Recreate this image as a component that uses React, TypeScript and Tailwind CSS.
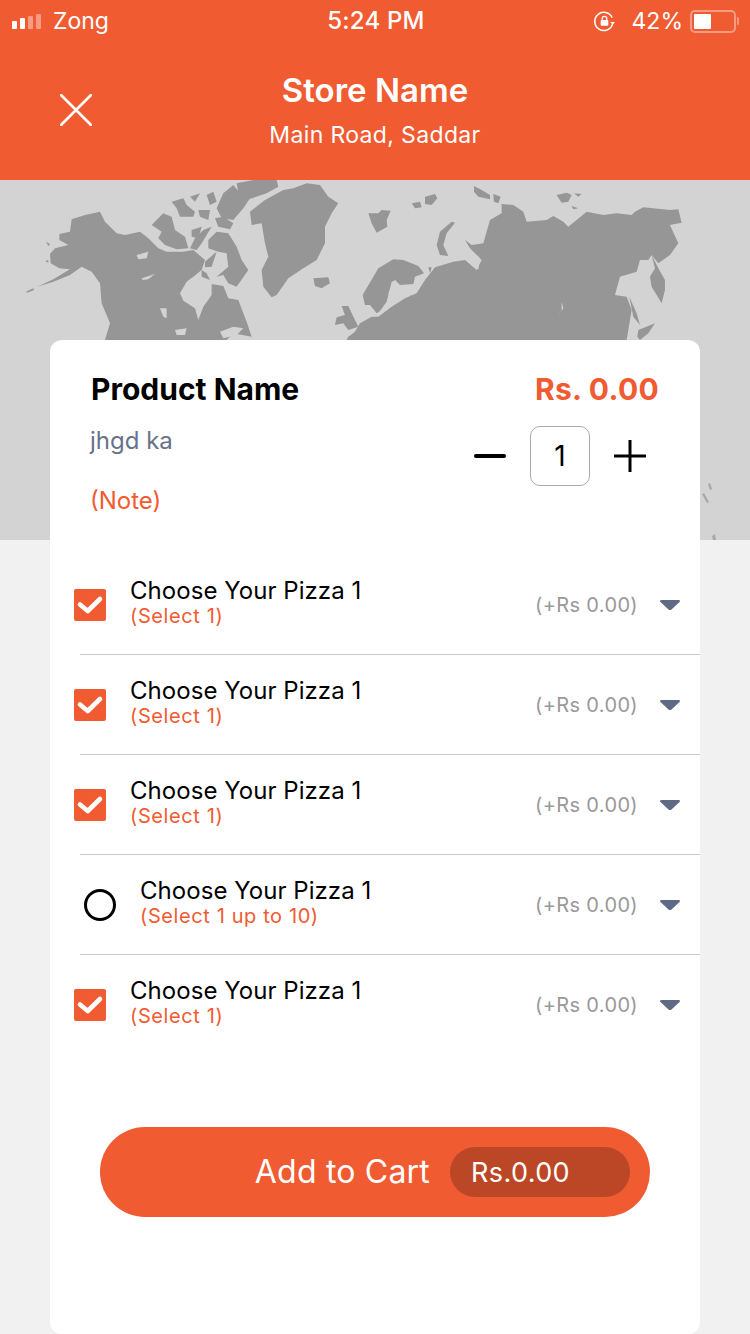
const orange = 'text-[#f05b32]';

// traced from the left half of the map (3x coords)
const americas = [
  '52,320 100,298 150,268 118,265 92,250 90,222 105,205 145,195 118,180 118,162 150,155 155,118 195,105 240,95 255,125 290,160 315,165 360,155 385,175 415,205 440,215 490,215 520,210 555,240 545,270 520,290 500,305 480,340 490,362 525,385 535,420 550,380 575,345 575,312 610,318 625,355 655,360 670,400 680,425 695,470 640,460 620,480 255,480 270,430 245,370 240,310 215,275 185,260 150,285 100,305',
  '18,335 40,325 42,330 22,338',
  '78,185 90,192 85,198',
  '75,243 85,240 85,248',
  '395,135 430,100 455,110 465,150 495,170 505,205 470,208 435,195 415,175 425,155',
  '515,150 545,140 535,175 515,170',
  '550,150 575,140 545,190 530,210 510,205 525,175',
  '565,180 590,155 625,160 650,200 665,240 685,270 650,320 625,310 610,285 590,290 625,260 620,220 595,215 565,205',
  '555,245 590,215 575,260 555,262',
  '545,270 560,280 570,300 545,290',
  '455,65 490,55 500,75 525,95 520,110 480,110 470,85',
  '510,50 540,40 525,65',
  '560,45 580,35 590,65 570,75',
  '535,90 570,90 565,120 540,110',
  '585,115 610,110 640,130 630,148 595,140',
  '590,85 610,40 640,15 660,40 690,55 670,85 640,120 605,115',
  '650,10 700,0 770,0 775,20 740,40 680,60 655,40',
  // greenland
  '690,95 735,60 790,30 820,25 860,10 900,15 925,50 955,70 935,100 915,140 915,190 890,240 850,265 805,295 770,345 755,352 730,320 725,270 745,230 735,190 725,130 695,135',
  // iceland
  '880,295 925,292 930,310 905,325 885,318',
  // britain
  '965,378 985,378 1005,420 1015,440 985,450 970,430 945,435 950,412 975,405',
  '985,470 1020,445 1020,480 980,480',
];

const americasLakes = [
  '350,225 385,215 380,235 355,238',
  '365,295 405,282 385,298 368,300',
  '465,450 500,445 495,465 470,465',
  '600,455 640,440 670,445 650,465 610,475',
  '420,385 440,385 440,415 430,410',
];

// traced from the right half of the map (3x coords)
const eurasia = [
  '55,100 85,100 95,90 122,92 110,120 112,140 80,158 65,130',
  '185,70 210,65 215,82 195,85',
  '225,50 255,42 262,55 245,75 225,72',
  '305,125 315,128 290,160 280,195 295,228 270,225 260,195 270,155',
  '372,18 395,30 420,45 420,58 385,50 372,35',
  '430,42 452,50 445,70 432,65',
  '620,45 650,38 665,45 655,65 635,68',
  '672,40 695,42 685,50',
  '665,78 685,85 670,88',
  '0,480 30,430 65,410 85,410 125,380 165,355 200,340 225,300 255,262 310,245 345,240 380,270 395,240 360,205 345,180 365,195 400,190 420,120 455,100 455,72 490,75 520,95 530,125 590,120 610,108 640,125 655,140 680,120 710,95 760,105 800,100 845,105 855,95 880,82 960,90 985,88 995,128 960,135 985,190 960,225 925,250 905,225 895,240 870,240 860,275 810,290 795,345 830,350 845,390 830,480',
  '38,345 85,265 130,238 160,240 205,258 222,280 195,290 190,312 150,315 135,300 115,340 125,365 105,385 80,400 60,375 45,375',
  '905,225 925,265 945,300 945,330 935,370 905,320 900,290 915,265',
  '838,350 860,400 870,435 850,410',
  '865,450 915,430 895,460 870,480 862,470',
  '235,262 245,262 240,280',
  '180,345 190,350 185,355',
  '0,405 20,430 5,445',
];

const eurasiaLakes = [
  '635,365 640,385 625,405 635,390',
  '385,270 390,235 380,225 378,260',
  '125,305 138,300 122,340 128,362 108,385 85,400 110,365',
];

const specks = [
  '702,314 704,313 709,322 707,323',
  '708,304 710,303 712,309 710,310',
  '712,356 715,354 716,360 713,360',
];

function WorldMap() {
  return (
    <svg viewBox="0 0 750 360" className="block w-[750px] h-[360px]">
      <g transform="translate(20 0) scale(0.3333)">
        <g fill="#969696">{americas.map((p, i) => <polygon key={i} points={p} />)}</g>
        <g fill="#d3d3d3">{americasLakes.map((p, i) => <polygon key={i} points={p} />)}</g>
      </g>
      <g transform="translate(350 0) scale(0.3333)">
        <g fill="#969696">{eurasia.map((p, i) => <polygon key={i} points={p} />)}</g>
        <g fill="#d3d3d3">{eurasiaLakes.map((p, i) => <polygon key={i} points={p} />)}</g>
      </g>
      <g fill="#a8a8a8">{specks.map((p, i) => <polygon key={i} points={p} />)}</g>
    </svg>
  );
}

function StatusBar() {
  return (
    <div className="grid grid-cols-3 items-center h-[42px] pl-[12px] pr-[14px] text-white">
      <div className="flex items-center gap-[12px]">
        <div className="flex items-end gap-[3px] h-[15px]">
          <span className="w-[5px] h-[8px] rounded-[1px] bg-white" />
          <span className="w-[5px] h-[11px] rounded-[1px] bg-white" />
          <span className="w-[5px] h-[13px] rounded-[1px] bg-white/40" />
          <span className="w-[5px] h-[15px] rounded-[1px] bg-white/40" />
        </div>
        <span className="text-[23px] leading-none">Zong</span>
      </div>
      <div className="pl-[4px] text-center text-[24px] font-medium leading-none tracking-[0.2px]">5:24 PM</div>
      <div className="flex items-center justify-end">
        <svg viewBox="0 0 24 24" className="w-[23px] h-[23px] mr-[16px]" fill="none" stroke="white" strokeWidth="1.6">
          <path d="M20.5 14.5A9.5 9.5 0 1 1 20 8" />
          <path d="M18 12.5h5l-2.5 3z" fill="white" stroke="none" />
          <rect x="8" y="10.5" width="8" height="6" rx="1" fill="white" stroke="none" />
          <path d="M9.6 10.5V9a2.4 2.4 0 0 1 4.8 0v1.5" strokeWidth="1.3" />
        </svg>
        <span className="text-[23px] leading-none mr-[7px]">42%</span>
        <div className="relative w-[46px] h-[23px] rounded-[5px] border-2 border-white/40 p-[2px]">
          <div className="w-[17px] h-full bg-white rounded-[1px]" />
          <span className="absolute right-[-5px] top-[5px] w-[2px] h-[8px] rounded-r-sm bg-white/40" />
        </div>
      </div>
    </div>
  );
}

function Check() {
  return (
    <div className="flex items-center justify-center w-[32px] h-[32px] rounded-[2px] bg-[#f05b32] shrink-0">
      <svg viewBox="0 0 32 32" className="w-[32px] h-[32px]" fill="none" stroke="white" strokeWidth="4.6" strokeLinecap="round" strokeLinejoin="round">
        <path d="M6 15.5 13.7 22 26 10" />
      </svg>
    </div>
  );
}

function Radio() {
  return <div className="w-[32px] h-[32px] rounded-full border-[3.5px] border-black shrink-0" />;
}

type RowProps = { radio?: boolean; note?: string; last?: boolean };

function OptionRow({ radio, note = '(Select 1)', last }: RowProps) {
  return (
    <div className="flex flex-col h-[100px]">
      <div className={`flex-1 flex items-center pr-[20px] ${radio ? 'pl-[34px]' : 'pl-[24px]'}`}>
        {radio ? <Radio /> : <Check />}
        <div className="ml-[24px] flex-1 pb-[6px]">
          <div className="text-[24px] leading-[29px] tracking-[0.05px] text-black">Choose Your Pizza 1</div>
          <div className={`text-[20px] leading-[23px] tracking-[0.6px] ${orange}`}>{note}</div>
        </div>
        <span className="text-[20px] tracking-[0.35px] text-[#999999]">(+Rs 0.00)</span>
        <svg viewBox="0 0 20 10" className="ml-[22px] w-[20px] h-[10px]" fill="#5f6b85">
          <path d="M0.5 0h19l0.5 1.5L11 10H9L0 1.5z" />
        </svg>
      </div>
      {!last && <div className="h-px ml-[30px] bg-[#c9c9c9]" />}
    </div>
  );
}

export default function App() {
  return (
    <div className="w-[750px] h-[1334px] overflow-hidden bg-[#f1f1f1] font-['Inter',sans-serif]">
      <header className="h-[180px] bg-[#f05b32]">
        <StatusBar />
        <div className="relative text-center text-white">
          <div className="pt-[28px] text-[33px] font-semibold leading-[40px]">Store Name</div>
          <div className="mt-[10px] text-[23px] leading-[30px] tracking-[0.35px]">Main Road, Saddar</div>
          <svg viewBox="0 0 32 32" className="absolute left-[60px] top-[52px] w-[32px] h-[32px]" stroke="white" strokeWidth="2.6" strokeLinecap="round">
            <path d="M1 1 31 31M31 1 1 31" />
          </svg>
        </div>
      </header>

      <div className="h-[360px] bg-[#d3d3d3]">
        <WorldMap />
      </div>

      <main className="relative mx-[50px] mt-[-200px] h-[994px] rounded-[12px] bg-white">
        <div className="flex items-center justify-between px-[41px] pt-[31px]">
          <h1 className="text-[30px] font-bold leading-[36px] text-black">Product Name</h1>
          <span className={`text-[30px] font-bold leading-[36px] tracking-[0.3px] ${orange}`}>Rs. 0.00</span>
        </div>

        <div className="flex justify-between pl-[40px] pr-[54px] mt-[19px]">
          <div>
            <div className="text-[24px] leading-[30px] text-[#67728b]">jhgd ka</div>
            <div className={`mt-[30px] text-[24px] leading-[30px] ${orange}`}>(Note)</div>
          </div>
          <div className="flex items-center h-[60px] gap-[24px]">
            <span className="w-[32px] h-[4px] rounded-full bg-black" />
            <div className="flex items-center justify-center w-[60px] h-[60px] rounded-[10px] border border-[#aaaaaa] text-[28px] text-black">1</div>
            <svg viewBox="0 0 32 32" className="w-[32px] h-[32px]" stroke="black" strokeWidth="3">
              <path d="M16 0v32M0 16h32" />
            </svg>
          </div>
        </div>

        <div className="mt-[39px]">
          <OptionRow />
          <OptionRow />
          <OptionRow />
          <OptionRow radio note="(Select 1 up to 10)" />
          <OptionRow last />
        </div>

        <button className="flex items-center justify-end mx-[50px] mt-[72px] w-[550px] h-[90px] rounded-[45px] bg-[#f05b32] pr-[20px] text-white">
          <span className="text-[32px] leading-none tracking-[0.2px]">Add to Cart</span>
          <span className="ml-[20px] flex items-center w-[180px] h-[50px] rounded-[25px] bg-[#bc4726] pl-[21px] text-[27px] leading-none tracking-[0.4px]">Rs.0.00</span>
        </button>
      </main>
    </div>
  );
}
